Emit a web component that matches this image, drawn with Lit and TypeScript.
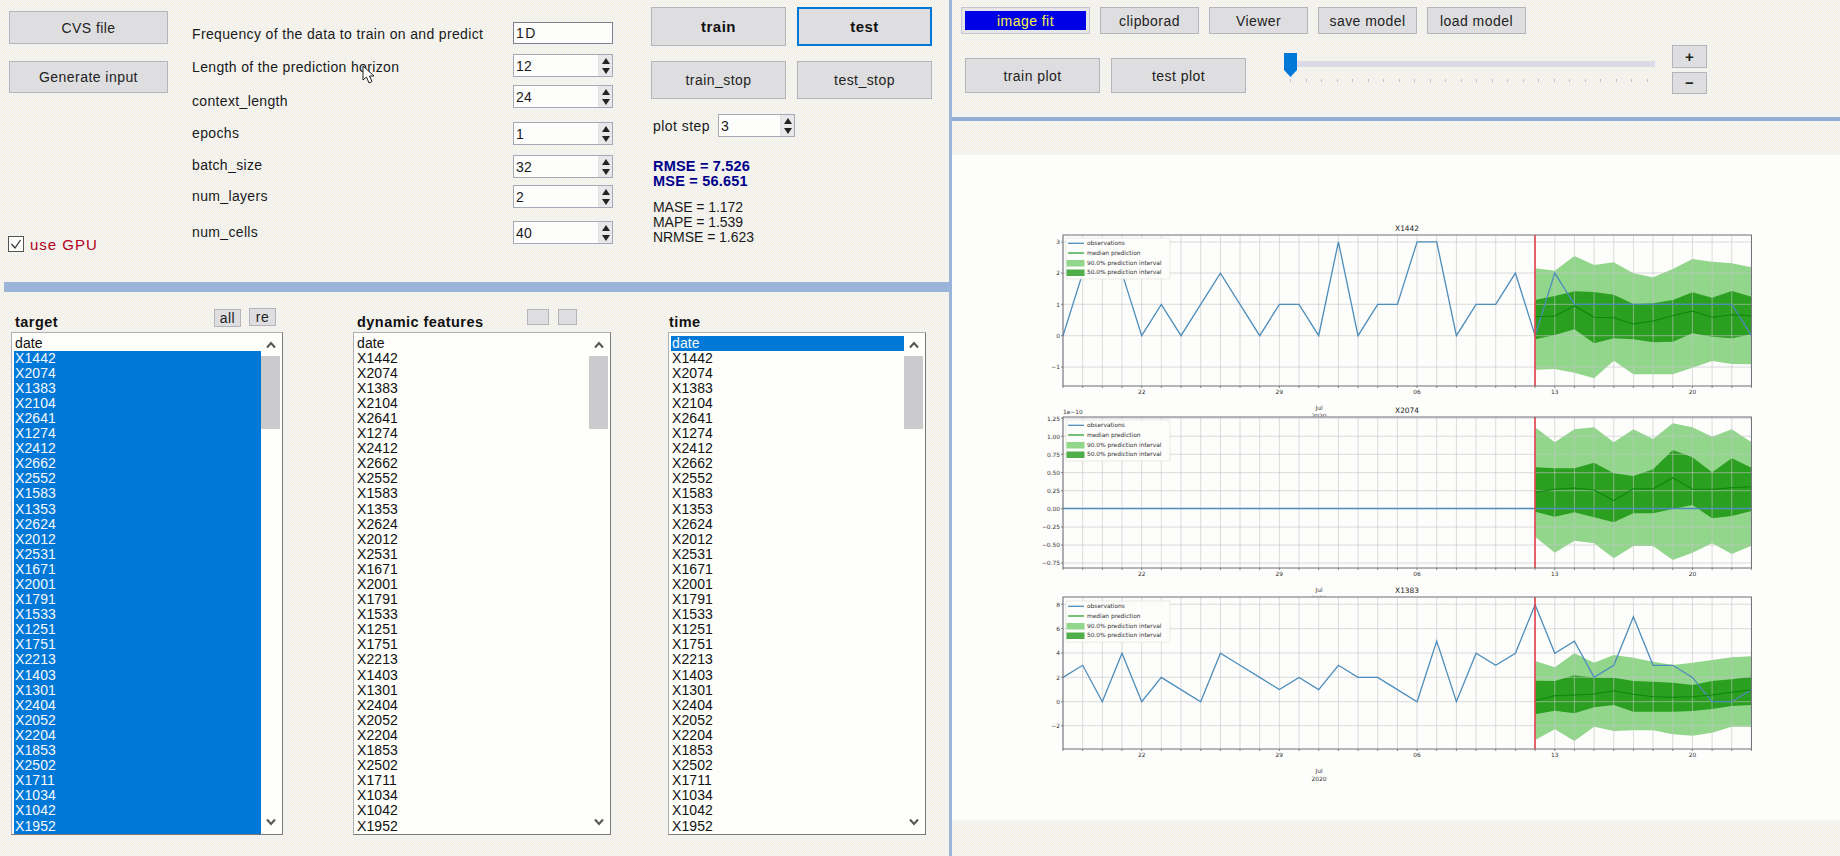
import { LitElement, html, css, svg } from "lit";
import { customElement } from "lit/decorators.js";

const NAMES = "X1442 X2074 X1383 X2104 X2641 X1274 X2412 X2662 X2552 X1583 X1353 X2624 X2012 X2531 X1671 X2001 X1791 X1533 X1251 X1751 X2213 X1403 X1301 X2404 X2052 X2204 X1853 X2502 X1711 X1034 X1042 X1952".split(" ");
const LABELS = [
  "Frequency of the data to train on and predict",
  "Length of the prediction horizon",
  "context_length",
  "epochs",
  "batch_size",
  "num_layers",
  "num_cells",
];
const SPINS = ["12", "24", "1", "32", "2", "40"];

const X0 = 1063;
const DX = 19.67;
const xOf = (d: number) => X0 + d * DX;

interface Chart {
  title: string;
  top: number;
  bottom: number;
  off: number;
  legendTop: number;
  ticks: [string, number][];
  obs: number[];
  y: (v: number) => number;
  b90t: number[];
  b90b: number[];
  b50t: number[];
  b50b: number[];
  med: number[];
}

const CHARTS: Chart[] = [
  {
    title: "X1442", top: 235, bottom: 386, off: 220, legendTop: 238,
    ticks: [["3", 242], ["2", 273], ["1", 304.3], ["0", 335.7], ["−1", 367]],
    obs: [0, 2, 2, 2, 0, 1, 0, 1, 2, 1, 0, 1, 1, 0, 3, 0, 1, 1, 3, 3, 0, 1, 1, 2, 0, 2, 1, 1, 1, 1, 1, 1, 1, 1, 1, 0],
    y: (v) => 335.7 - v * 31.3,
    b90t: [145, 152, 108, 135, 127, 160, 172, 147, 117, 125, 130, 142],
    b90b: [449, 447, 458, 475, 422, 463, 463, 463, 443, 423, 432, 433],
    b50t: [240, 228, 214, 216, 224, 252, 250, 240, 217, 233, 213, 230],
    b50b: [358, 345, 328, 370, 355, 358, 367, 365, 340, 350, 355, 343],
    med: [290, 288, 258, 292, 293, 312, 303, 287, 273, 292, 284, 287],
  },
  {
    title: "X2074", top: 417, bottom: 568, off: 400, legendTop: 420,
    ticks: [["1.25", 418.3], ["1.00", 436.3], ["0.75", 454.3], ["0.50", 472.7], ["0.25", 490.7], ["0.00", 508.7], ["−0.25", 527], ["−0.50", 545], ["−0.75", 563]],
    obs: new Array(36).fill(0),
    y: () => 508.5,
    b90t: [82, 127, 88, 82, 127, 88, 117, 70, 82, 110, 88, 127],
    b90b: [410, 458, 422, 430, 475, 438, 438, 480, 458, 430, 462, 437],
    b50t: [202, 205, 205, 188, 220, 228, 208, 150, 172, 217, 175, 203],
    b50b: [335, 350, 337, 352, 367, 340, 340, 327, 315, 355, 348, 333],
    med: [277, 268, 264, 270, 302, 266, 267, 233, 268, 268, 263, 260],
  },
  {
    title: "X1383", top: 597, bottom: 749, off: 580, legendTop: 601,
    ticks: [["8", 604.3], ["6", 628.7], ["4", 653], ["2", 677.3], ["0", 701.7], ["−2", 725.7]],
    obs: [2, 3, 0, 4, 0, 2, 1, 0, 4, 3, 2, 1, 2, 1, 3, 2, 2, 1, 0, 5, 0, 4, 3, 4, 8, 4, 5, 2, 3, 7, 3, 3, 2, 0, 0, 1],
    y: (v) => 701.7 - v * 12.13,
    b90t: [243, 262, 220, 248, 225, 233, 245, 255, 248, 240, 232, 229],
    b90b: [480, 448, 483, 440, 453, 451, 451, 463, 467, 458, 440, 440],
    b50t: [302, 303, 286, 293, 293, 303, 305, 308, 315, 303, 298, 290],
    b50b: [403, 392, 400, 382, 375, 395, 395, 395, 393, 387, 378, 375],
    med: [362, 347, 345, 342, 332, 343, 350, 352, 350, 345, 337, 330],
  },
];

const bandX = (i: number) => xOf(24 + i).toFixed(1);

function poly(off: number, top: number[], bot: number[]) {
  const a = top.map((z, i) => `${bandX(i)},${(off + z / 3).toFixed(1)}`);
  const b = bot.map((z, i) => `${bandX(i)},${(off + z / 3).toFixed(1)}`).reverse();
  return [...a, ...b].join(" ");
}

function renderChart(c: Chart) {
  const days = Array.from({ length: 36 }, (_, i) => i);
  const obs = c.obs.map((v, i) => `${xOf(i).toFixed(1)},${c.y(v).toFixed(1)}`).join(" ");
  const med = c.med.map((z, i) => `${bandX(i)},${(c.off + z / 3).toFixed(1)}`).join(" ");
  const right = xOf(35);
  const lt = c.legendTop;
  const xt: [string, number][] = [["22", 4], ["29", 11], ["06", 18], ["13", 25], ["20", 32]];
  const legend = ["observations", "median prediction", "90.0% prediction interval", "50.0% prediction interval"];
  return svg`
    <rect x="${X0}" y="${c.top}" width="${right - X0}" height="${c.bottom - c.top}" fill="#fdfdfb"></rect>
    <polygon points="${poly(c.off, c.b90t, c.b90b)}" fill="#92d68c"></polygon>
    <polygon points="${poly(c.off, c.b50t, c.b50b)}" fill="#2b9f1f"></polygon>
    ${days.map((d) => svg`<line x1="${xOf(d)}" x2="${xOf(d)}" y1="${c.top}" y2="${c.bottom}" stroke="#c4c4c8" stroke-opacity=".6" stroke-width="1"></line>
      <line x1="${xOf(d)}" x2="${xOf(d)}" y1="${c.bottom}" y2="${c.bottom + 2}" stroke="#555" stroke-width=".7"></line>`)}
    ${c.ticks.map(([t, y]) => svg`
      <line x1="${X0}" x2="${right}" y1="${y}" y2="${y}" stroke="#c4c4c8" stroke-opacity=".6" stroke-width="1"></line>
      <line x1="${X0 - 2}" x2="${X0}" y1="${y}" y2="${y}" stroke="#555" stroke-width=".7"></line>
      <text class="t" x="${X0 - 3}" y="${y + 2.2}" text-anchor="end">${t}</text>`)}
    <polyline points="${obs}" fill="none" stroke="#4d8dbb" stroke-width="1.3"></polyline>
    <polyline points="${med}" fill="none" stroke="#0b870b" stroke-width="1.1"></polyline>
    <line x1="1535" x2="1535" y1="${c.top}" y2="${c.bottom}" stroke="#e2404a" stroke-width="1.6"></line>
    <rect x="${X0}" y="${c.top}" width="${right - X0}" height="${c.bottom - c.top}" fill="none" stroke="#6f6f78" stroke-width="1"></rect>
    ${xt.map(([t, d]) => svg`<text class="t" x="${xOf(d)}" y="${c.bottom + 8.3}" text-anchor="middle">${t}</text>`)}
    <text class="t" x="1319" y="${c.bottom + 24}" text-anchor="middle">Jul</text>
    <text class="t" x="1319" y="${c.bottom + 32}" text-anchor="middle">2020</text>
    <text class="title" x="1407" y="${c.top - 4.3}" text-anchor="middle">${c.title}</text>
    <rect x="1066" y="${lt}" width="104" height="41" rx="1" fill="#fdfdfb" fill-opacity=".88" stroke="#e0e0dc" stroke-width=".7"></rect>
    <line x1="1068" x2="1084" y1="${lt + 5.3}" y2="${lt + 5.3}" stroke="#4d8dbb" stroke-width="1.3"></line>
    <line x1="1068" x2="1084" y1="${lt + 15}" y2="${lt + 15}" stroke="#2f9f2f" stroke-width="1.3"></line>
    <rect x="1066.5" y="${lt + 22}" width="18" height="6.5" fill="#92d68c"></rect>
    <rect x="1066.5" y="${lt + 31.5}" width="18" height="6.5" fill="#4fae49"></rect>
    ${legend.map((t, i) => svg`<text class="t" x="1087" y="${lt + 7.4 + i * 9.67}">${t}</text>`)}
  `;
}

@customElement("app-root")
export class AppRoot extends LitElement {
  static styles = css`
    :host {
      display: block;
      width: 1840px;
      height: 856px;
      overflow: hidden;
      font-family: "Liberation Sans", Arial, sans-serif;
      font-size: 14px;
      color: #1a1a1a;
      background: repeating-conic-gradient(#fbf9e4 0 25%, #ebecf7 0 50%) 0 0 / 2px 2px;
    }
    .app { display: grid; grid-template-columns: 949px 3px 888px; height: 856px; position: relative; }
    .vsplit { background: #9ab5d9; }
    .left { display: grid; grid-template-rows: 282px 10px 564px; }
    .hsplit-l { background: #9ab5d9; margin-left: 4px; }
    .ltop { display: grid; grid-template-columns: 192px 459px 298px; }

    .btn {
      display: flex; align-items: center; justify-content: center;
      box-sizing: border-box; background: #dedee0;
      border: 1px solid #b4b4bc; color: #222; letter-spacing: .45px; white-space: nowrap;
    }
    .cola { display: flex; flex-direction: column; padding: 11px 0 0 9px; }
    .cola .btn { width: 159px; height: 33px; }
    .cola .btn + .btn { margin-top: 17px; height: 32px; }
    .gpu { display: flex; align-items: center; gap: 6px; margin-top: 143px; margin-left: -1px; height: 16px; color: #b00020; font-size: 15px; letter-spacing: 1px; }
    .check { box-sizing: border-box; width: 16px; height: 16px; border: 1px solid #555; background: #fdfdfb; display: flex; }

    .colb { display: flex; }
    .labels { width: 321px; box-sizing: border-box; padding-top: 26px; display: grid; grid-template-rows: 33px 34px 32px 32px 31px 36px 16px; line-height: 16px; letter-spacing: .35px; white-space: nowrap; align-content: start; }
    .inputs { width: 100px; padding-top: 22px; display: grid; grid-template-rows: 32px 31px 37px 33px 30px 36px 23px; align-content: start; }
    .box { box-sizing: border-box; height: 23px; border: 1px solid #a6a9b8; background: #fdfdfb; display: flex; align-items: center; justify-content: space-between; padding-left: 2px; letter-spacing: .3px; }
    .freq { border-color: #7d8090; height: 22px; letter-spacing: 1.5px; }
    .arrows { width: 14px; height: 100%; box-sizing: border-box; border-left: 1px solid #e2e2e6; background: #e8e8ea; display: flex; flex-direction: column; align-items: center; justify-content: center; gap: 2px; padding: 1px; }
    .arrows svg { display: block; }

    .colc { padding-top: 7px; }
    .actions { display: grid; grid-template-columns: 135px 135px; column-gap: 11px; grid-template-rows: 39px 38px; row-gap: 15px; }
    .strong { font-weight: 700; font-size: 15px; color: #111; }
    .focus { border: 2px solid #0078d7; }
    .step { display: flex; align-items: center; margin-top: 15px; padding-left: 2px; }
    .step span { width: 65px; letter-spacing: .45px; }
    .step .box { width: 77px; }
    .step .box span { width: auto; }
    .metric { margin: 22px 0 0 2px; line-height: 15.3px; }
    .big { color: #00008b; font-weight: 700; font-size: 14.5px; letter-spacing: .2px; }
    .small { margin-top: 10px; letter-spacing: -.05px; }

    .lbottom { display: flex; padding-left: 11px; }
    .col { display: flex; flex-direction: column; flex: none; }
    .col1 { width: 272px; }
    .col2 { width: 258px; margin-left: 70px; }
    .col3 { width: 258px; margin-left: 57px; }
    .head { height: 40px; display: flex; align-items: flex-end; box-sizing: border-box; }
    .head b { flex: 1; padding: 0 0 2px 4px; line-height: 16px; font-size: 14.5px; letter-spacing: .45px; color: #111; white-space: nowrap; }
    .col3 .head b { padding-left: 1px; }
    .mini { display: flex; gap: 8px; padding: 0 7px 5px 0; align-items: flex-end; }
    .col2 .mini { padding-right: 34px; gap: 9px; padding-bottom: 7px; }
    .mini .btn { height: 18px; width: 27px; }
    .mini .re { height: 18px; margin-bottom: 1px; }
    .col2 .mini .btn { height: 16px; margin: 0; width: 22px; }
    .col2 .mini .btn + .btn { width: 19px; }

    .list { height: 503px; box-sizing: border-box; background: #fefefb; border: 1px solid #b0b0b4; border-right-color: #77777c; border-bottom-color: #77777c; display: flex; overflow: hidden; }
    .items { flex: 1; min-width: 0; padding: 2.5px 0 0 2px; }
    .item { height: 15.1px; line-height: 15.1px; padding-left: 1px; letter-spacing: .1px; color: #111; }
    .sel { background: #0078d7; color: #f4f8fc; }
    .sb { width: 21px; flex: none; display: flex; flex-direction: column; align-items: center; padding-right: 2px; box-sizing: border-box; }
    .sb .up { height: 23px; display: flex; align-items: center; }
    .sb .thumb { width: 19px; height: 73px; background: #cbcbcd; }
    .sb .down { margin-top: auto; height: 24px; display: flex; align-items: center; }

    .right { display: grid; grid-template-rows: 117px 4px 34px 665px 36px; }
    .rtop { display: flex; flex-direction: column; }
    .r1 { display: flex; gap: 10px; padding: 7px 0 0 9px; height: 27px; }
    .r1 .btn { height: 27px; width: 99px; font-size: 14px; }
    .fit { width: 129px !important; background: #e6e6ea; padding: 3px; border-color: #c6c6d0; }
    .fit span { flex: 1; align-self: stretch; display: flex; align-items: center; justify-content: center; background: #0000e6; color: #f5f544; }
    .r2 { display: flex; margin: 11px 0 0 13px; }
    .r2 > .btn { width: 135px; height: 35px; margin-top: 13px; }
    .r2 > .btn + .btn { margin-left: 11px; }
    .slider { position: relative; width: 371px; height: 40px; margin: 8px 0 0 38px; }
    .track { height: 6px; margin: 8px 0 0 13px; background: #dadbe6; }
    .ticks { display: flex; justify-content: space-between; margin: 12px 7px 0 6px; }
    .ticks i { display: block; width: 1px; height: 3px; background: #c4c4c8; }
    .thumb2 { position: absolute; left: 0; top: 0; display: block; }
    .pm { display: flex; flex-direction: column; gap: 4px; margin-left: 17px; }
    .pm .btn { width: 35px; height: 22.5px; font-weight: 700; font-size: 15px; letter-spacing: 0; }
    .hsplit-r { background: #92add3; }
    .plot { background: #fdfdfb; }
    .plot svg { display: block; }
    .t { font-family: "DejaVu Sans", sans-serif; font-size: 5.9px; fill: #333; }
    .title { font-family: "DejaVu Sans", sans-serif; font-size: 7.4px; fill: #222; }
    .cursor { position: absolute; left: 362px; top: 65px; display: block; }
  `;

  private spin(v: string) {
    return html`<div class="box"><span>${v}</span><div class="arrows">
      <svg width="10" height="8" viewBox="0 0 10 8"><path d="M5 1 9 7H1z" fill="#222"></path></svg>
      <svg width="10" height="8" viewBox="0 0 10 8"><path d="M5 7 9 1H1z" fill="#222"></path></svg>
    </div></div>`;
  }

  private list(selected: (name: string) => boolean) {
    return html`<div class="list">
      <div class="items">
        ${["date", ...NAMES].map((n) => html`<div class="item ${selected(n) ? "sel" : ""}">${n}</div>`)}
      </div>
      <div class="sb">
        <div class="up"><svg width="10" height="8" viewBox="0 0 10 8"><path d="M1 6.5 5 2l4 4.5" fill="none" stroke="#555" stroke-width="2"></path></svg></div>
        <div class="thumb"></div>
        <div class="down"><svg width="10" height="8" viewBox="0 0 10 8"><path d="M1 1.5 5 6l4-4.500" fill="none" stroke="#555" stroke-width="2"></path></svg></div>
      </div>
    </div>`;
  }

  render() {
    return html`<div class="app">
      <section class="left">
        <div class="ltop">
          <div class="cola">
            <div class="btn">CVS file</div>
            <div class="btn">Generate input</div>
            <div class="gpu"><span class="check"><svg width="14" height="14" viewBox="0 0 14 14"><path d="M2.5 7 6 11 11.500 3" fill="none" stroke="#333" stroke-width="1.3"></path></svg></span>use GPU</div>
          </div>
          <div class="colb">
            <div class="labels">${LABELS.map((l) => html`<div>${l}</div>`)}</div>
            <div class="inputs">
              <div class="box freq">1D</div>
              ${SPINS.map((s) => this.spin(s))}
            </div>
          </div>
          <div class="colc">
            <div class="actions">
              <div class="btn strong">train</div>
              <div class="btn strong focus">test</div>
              <div class="btn">train_stop</div>
              <div class="btn">test_stop</div>
            </div>
            <div class="step"><span>plot step</span>${this.spin("3")}</div>
            <div class="metric big"><div>RMSE = 7.526</div><div>MSE = 56.651</div></div>
            <div class="metric small"><div>MASE = 1.172</div><div>MAPE = 1.539</div><div>NRMSE = 1.623</div></div>
          </div>
        </div>
        <div class="hsplit-l"></div>
        <div class="lbottom">
          <div class="col col1">
            <div class="head"><b>target</b><div class="mini"><div class="btn">all</div><div class="btn re">re</div></div></div>
            ${this.list((n) => n !== "date")}
          </div>
          <div class="col col2">
            <div class="head"><b>dynamic features</b><div class="mini"><div class="btn"></div><div class="btn"></div></div></div>
            ${this.list(() => false)}
          </div>
          <div class="col col3">
            <div class="head"><b>time</b></div>
            ${this.list((n) => n === "date")}
          </div>
        </div>
      </section>
      <div class="vsplit"></div>
      <section class="right">
        <div class="rtop">
          <div class="r1">
            <div class="btn fit"><span>image fit</span></div>
            <div class="btn">clipborad</div>
            <div class="btn">Viewer</div>
            <div class="btn">save model</div>
            <div class="btn">load model</div>
          </div>
          <div class="r2">
            <div class="btn">train plot</div>
            <div class="btn">test plot</div>
            <div class="slider">
              <div class="track"></div>
              <div class="ticks">${Array.from({ length: 24 }, () => html`<i></i>`)}</div>
              <svg class="thumb2" width="13" height="24" viewBox="0 0 13 24"><path d="M0 0H13V17L6.500 24 0 17z" fill="#0078d7"></path></svg>
            </div>
            <div class="pm"><div class="btn">+</div><div class="btn">−</div></div>
          </div>
        </div>
        <div class="hsplit-r"></div>
        <div></div>
        <div class="plot">
          <svg width="888" height="665" viewBox="952 155 888 665">
            ${renderChart(CHARTS[0])}
            <rect x="1040" y="416.500" width="750" height="2" fill="#fdfdfb"></rect>
            ${renderChart(CHARTS[1])}
            <text class="t" x="1063" y="414">1e−10</text>
            <rect x="1040" y="596.500" width="750" height="2" fill="#fdfdfb"></rect>
            ${renderChart(CHARTS[2])}
          </svg>
        </div>
        <div></div>
      </section>
      <svg class="cursor" width="14" height="19" viewBox="0 0 14 19"><path d="M1 1V15L4.500 12 7 18 10 16.500 7.500 11H12z" fill="#fff" stroke="#222" stroke-width="1"></path></svg>
    </div>`;
  }
}
